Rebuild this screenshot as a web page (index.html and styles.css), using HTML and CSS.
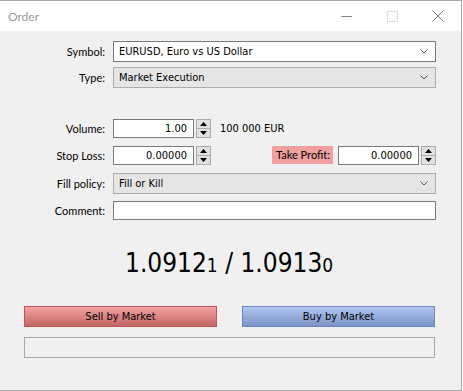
FILE: index.html
```html
<!DOCTYPE html>
<html>
<head>
<meta charset="utf-8">
<title>Order</title>
<link rel="stylesheet" href="styles.css">
</head>
<body>
<div class="window">
  <div class="titlebar">
    <span class="title">Order</span>
    <div class="caps">
      <div class="cap"><svg width="11" height="11" viewBox="0 0 11 11"><line x1="0" y1="5.5" x2="11" y2="5.5" stroke="#888" stroke-width="1"/></svg></div>
      <div class="cap"><svg width="11" height="11" viewBox="0 0 11 11"><rect x="0.5" y="0.5" width="10" height="10" fill="none" stroke="#dcdcdc" stroke-width="1"/></svg></div>
      <div class="cap"><svg width="12" height="12" viewBox="0 0 12 12"><path d="M0.5 0.5 L11.5 11.5 M11.5 0.5 L0.5 11.5" stroke="#777" stroke-width="1" fill="none"/></svg></div>
    </div>
  </div>
  <div class="content">
    <div class="row row-symbol">
      <span class="lbl">Symbol:</span>
      <div class="combo combo-white"><span class="ctext">EURUSD, Euro vs US Dollar</span><svg class="chev" width="8" height="5" viewBox="0 0 8 5"><path d="M0.5 0.5 L4 4 L7.5 0.5" stroke="#555" stroke-width="1" fill="none"/></svg></div>
    </div>
    <div class="row row-type">
      <span class="lbl">Type:</span>
      <div class="combo combo-gray"><span class="ctext">Market Execution</span><svg class="chev" width="8" height="5" viewBox="0 0 8 5"><path d="M0.5 0.5 L4 4 L7.5 0.5" stroke="#555" stroke-width="1" fill="none"/></svg></div>
    </div>
    <div class="row row-volume">
      <span class="lbl">Volume:</span>
      <div class="field"><span class="ftext">1.00</span></div>
      <div class="spin"><div class="sb"><svg width="7" height="4" viewBox="0 0 7 4"><path d="M3.5 0 L7 4 L0 4 Z" fill="#000"/></svg></div><div class="sb"><svg width="7" height="4" viewBox="0 0 7 4"><path d="M0 0 L7 0 L3.5 4 Z" fill="#000"/></svg></div></div>
      <span class="note">100 000 EUR</span>
    </div>
    <div class="row row-stop">
      <span class="lbl">Stop Loss:</span>
      <div class="field"><span class="ftext">0.00000</span></div>
      <div class="spin"><div class="sb"><svg width="7" height="4" viewBox="0 0 7 4"><path d="M3.5 0 L7 4 L0 4 Z" fill="#000"/></svg></div><div class="sb"><svg width="7" height="4" viewBox="0 0 7 4"><path d="M0 0 L7 0 L3.5 4 Z" fill="#000"/></svg></div></div>
      <span class="spacer"></span>
      <span class="tp">Take Profit:</span>
      <div class="field"><span class="ftext">0.00000</span></div>
      <div class="spin"><div class="sb"><svg width="7" height="4" viewBox="0 0 7 4"><path d="M3.5 0 L7 4 L0 4 Z" fill="#000"/></svg></div><div class="sb"><svg width="7" height="4" viewBox="0 0 7 4"><path d="M0 0 L7 0 L3.5 4 Z" fill="#000"/></svg></div></div>
    </div>
    <div class="row row-fill">
      <span class="lbl">Fill policy:</span>
      <div class="combo combo-gray"><span class="ctext">Fill or Kill</span><svg class="chev" width="8" height="5" viewBox="0 0 8 5"><path d="M0.5 0.5 L4 4 L7.5 0.5" stroke="#555" stroke-width="1" fill="none"/></svg></div>
    </div>
    <div class="row row-comment">
      <span class="lbl">Comment:</span>
      <div class="comment"></div>
    </div>
    <div class="price">1.0912<span class="small">1</span> / 1.0913<span class="small">0</span></div>
    <div class="buttons">
      <div class="btn btn-sell">Sell by Market</div>
      <div class="btn btn-buy">Buy by Market</div>
    </div>
    <div class="progress"></div>
  </div>
</div>
</body>
</html>
```

FILE: styles.css
```css
html, body {
  margin: 0;
  padding: 0;
  background: #ffffff;
}
.window {
  width: 461px;
  height: 389px;
  border-top: 1px solid #a9a9a9;
  border-right: 1px solid #a9a9a9;
  border-bottom: 1px solid #a9a9a9;
  background: #f0f0f0;
  display: flex;
  flex-direction: column;
  font-family: "DejaVu Sans Condensed", "DejaVu Sans", sans-serif;
  font-stretch: condensed;
  font-size: 11px;
  color: #000;
}
.titlebar {
  height: 30px;
  background: #ffffff;
  display: flex;
  align-items: center;
  padding-left: 8px;
}
.title {
  font-family: "Lato", "Noto Sans", sans-serif;
  font-stretch: normal;
  font-size: 12px;
  color: #999999;
  flex: 1;
  padding-top: 1px;
}
.caps {
  display: flex;
  height: 30px;
}
.cap {
  width: 46px;
  display: flex;
  align-items: center;
  justify-content: center;
}
.cap svg { display: block; }
.content {
  display: flex;
  flex-direction: column;
  padding: 10px 25px 0 24px;
}
.row {
  display: flex;
  align-items: center;
}
.lbl {
  width: 81px;
  margin-right: 8px;
  text-align: right;
  font-family: "Lato", "Noto Sans", sans-serif;
  font-stretch: normal;
  font-size: 11px;
  color: #000;
}
.row-symbol { height: 21px; }
.row-type { height: 21px; margin-top: 5px; }
.row-volume { height: 19px; margin-top: 31px; }
.row-stop { height: 19px; margin-top: 8px; }
.row-fill { height: 21px; margin-top: 8px; }
.row-comment { height: 19px; margin-top: 7px; }
.combo {
  flex: 1;
  height: 100%;
  box-sizing: border-box;
  display: flex;
  align-items: center;
  padding: 0 7px 0 5px;
}
.combo-white {
  background: #ffffff;
  border: 1px solid #7a7a7a;
}
.combo-gray {
  background: #e5e5e5;
  border: 1px solid #adadad;
}
.ctext { flex: 1; }
.chev { display: block; }
.field {
  width: 81px;
  height: 100%;
  box-sizing: border-box;
  background: #ffffff;
  border: 1px solid #7a7a7a;
  display: flex;
  align-items: center;
  justify-content: flex-end;
  padding-right: 6px;
}
.spin {
  width: 15px;
  height: 100%;
  margin-left: 2px;
  box-sizing: border-box;
  border: 1px solid #adadad;
  background: #e1e1e1;
  display: flex;
  flex-direction: column;
}
.sb {
  flex: 1;
  display: flex;
  align-items: center;
  justify-content: center;
}
.sb + .sb { border-top: 1px solid #adadad; }
.sb svg { display: block; }
.note {
  margin-left: 9px;
}
.spacer { flex: 1; }
.tp {
  background: #f1a0a0;
  height: 18px;
  line-height: 18px;
  padding: 0 3px 0 4px;
  margin-right: 5px;
  font-family: "Lato", "Noto Sans", sans-serif;
  font-stretch: normal;
  font-size: 11px;
  align-self: flex-start;
}
.comment {
  flex: 1;
  height: 100%;
  box-sizing: border-box;
  background: #ffffff;
  border: 1px solid #7a7a7a;
}
.price {
  margin-top: 28px;
  padding-left: 101px;
  height: 30px;
  line-height: 30px;
  font-size: 26px;
  color: #000;
  white-space: pre;
}
.price .small {
  font-size: 19px;
}
.buttons {
  display: flex;
  justify-content: space-between;
  margin-top: 28px;
  margin-right: 1px;
}
.btn {
  width: 193px;
  height: 21px;
  box-sizing: border-box;
  display: flex;
  align-items: center;
  justify-content: center;
  font-size: 11px;
}
.btn-sell {
  background: linear-gradient(#f3a2a2, #c46666);
  border: 1px solid #bf5555;
}
.btn-buy {
  background: linear-gradient(#b1c7f3, #7b93c5);
  border: 1px solid #6b86c2;
}
.progress {
  margin-top: 10px;
  margin-right: 1px;
  height: 21px;
  box-sizing: border-box;
  border: 1px solid #a8a8a8;
  background: #f0f0f0;
}
```
